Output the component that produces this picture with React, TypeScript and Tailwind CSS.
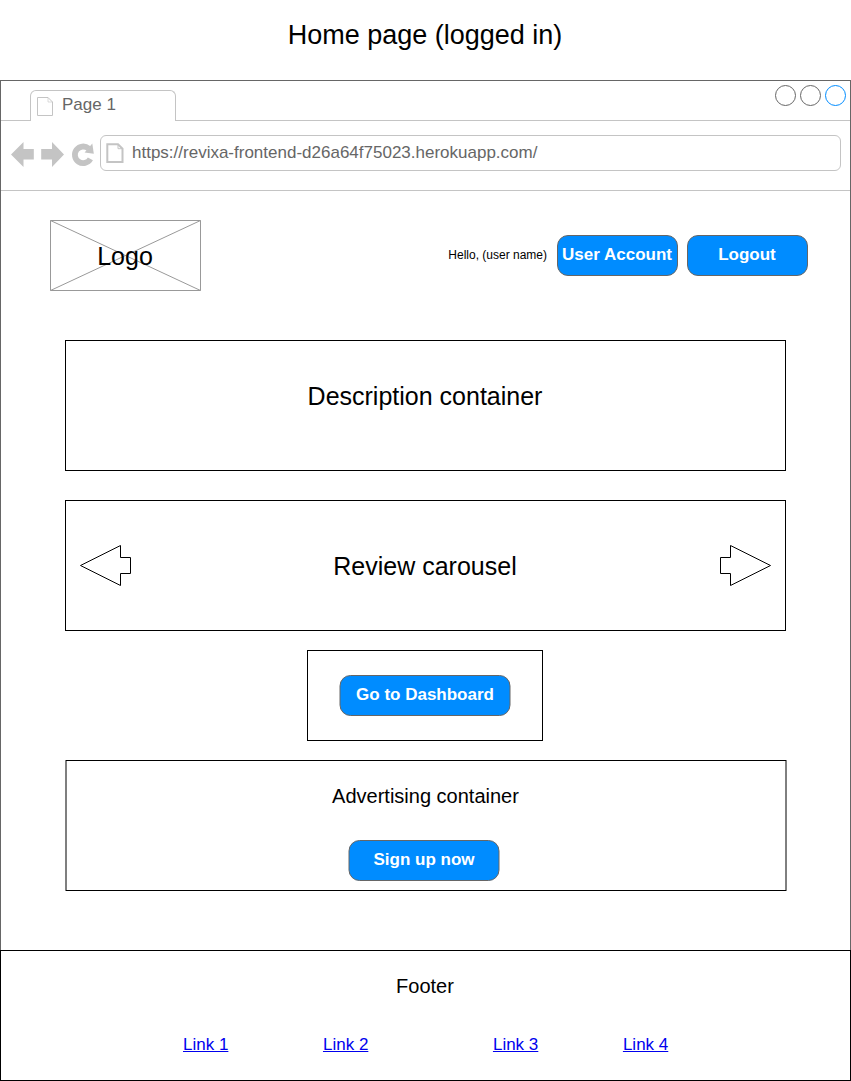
import React from "react";

function Button({ children, className }: { children: React.ReactNode; className: string }) {
  return (
    <button
      className={`flex h-[41px] shrink-0 items-center justify-center whitespace-nowrap rounded-[11px] border border-[#666666] bg-[#008cff] pb-px text-[17px] font-bold leading-5 text-white ${className}`}
    >
      {children}
    </button>
  );
}

function BrowserTabs() {
  return (
    <div className="flex h-10 items-end">
      <div className="h-full w-[29px] border-b border-[#c4c4c4]" />
      <div className="flex h-[31px] w-[146px] rounded-t-[6px] border-x border-t border-[#c4c4c4] pl-1.5">
        <svg className="mt-1.5 h-5 w-[17px]" viewBox="0 0 17 20" fill="none" stroke="#c4c4c4">
          <path d="M.5 .5H11L15.5 5V18.5H.5Z" />
          <path d="M11 .5V5H15.5" strokeOpacity=".6" />
        </svg>
        <span className="ml-2 mt-1 text-[17px] leading-5 text-[#666666]">Page 1</span>
      </div>
      <div className="flex h-full flex-1 justify-end border-b border-[#c4c4c4] pr-1 pt-1">
        <svg className="h-[21px] w-[71px]" viewBox="0 0 71 21" fill="none">
          <circle cx="10.5" cy="10.5" r="10" stroke="#666666" />
          <circle cx="35.5" cy="10.5" r="10" stroke="#666666" />
          <circle cx="60.5" cy="10.5" r="10" stroke="#008cff" />
        </svg>
      </div>
    </div>
  );
}

function AddressBar() {
  return (
    <div className="flex h-[70px] border-b border-[#c4c4c4]">
      <svg className="h-[69px] w-[99px] shrink-0" viewBox="1 121 99 69" fill="#c4c4c4">
        <path d="M11 154.5L23.5 142V149H33.8V159.5H23.5V167Z" />
        <path d="M64 154.5L52 142V149H41.2V159.5H52V167Z" />
        <path
          d="M90.4 158.9A8.3 8.3 0 1 1 88.6 148.5"
          fill="none"
          stroke="#c4c4c4"
          strokeWidth="5.8"
        />
        <path d="M92.3 143.6L93.8 153.8L84.6 152.4Z" />
      </svg>
      <div className="mt-3.5 flex h-9 w-[741px] rounded-[6px] border border-[#c4c4c4] pl-[5px]">
        <svg className="mt-[7px] h-5 w-[18px]" viewBox="0 0 18 20" fill="none" stroke="#c4c4c4">
          <path d="M1.3 1.2H12L16.5 5.7V19H1.3Z" strokeWidth="2" />
          <path d="M12 1.2V5.7H16.5" />
        </svg>
        <span className="ml-2 mt-[7px] text-[17px] leading-5 text-[#666666]">
          https://revixa-frontend-d26a64f75023.herokuapp.com/
        </span>
      </div>
    </div>
  );
}

function Header() {
  return (
    <header className="mt-[29px] flex h-[71px] items-center pl-[49px] pr-[42px]">
      <div className="grid h-[71px] w-[151px] place-items-center">
        <svg className="col-start-1 row-start-1 h-[71px] w-[151px]" viewBox="0 0 151 71" fill="none" stroke="#999999">
          <path d="M.5 .5H150.5V70.5H.5ZM.5 .5L150.5 70.5M150.5 .5L.5 70.5" />
        </svg>
        <span className="col-start-1 row-start-1 mr-px text-[25px] leading-7">Logo</span>
      </div>
      <span className="mb-0.5 ml-auto mr-2.5 text-[12px] leading-4">Hello, (user name)</span>
      <Button className="mr-[9px] w-[121px] pr-px">User Account</Button>
      <Button className="w-[121px] pr-px">Logout</Button>
    </header>
  );
}

function CarouselArrow({ className }: { className?: string }) {
  return (
    <svg className={`h-[42px] w-[52px] ${className ?? ""}`} viewBox="0 0 52 42" fill="none" stroke="#000">
      <path d="M.5 20.5L40.5 .5V12.5H50.5V28.5H40.5V40.5Z" />
    </svg>
  );
}

const links = [
  { label: "Link 1", gap: "ml-[182px]" },
  { label: "Link 2", gap: "ml-[94.6px]" },
  { label: "Link 3", gap: "ml-[124.6px]" },
  { label: "Link 4", gap: "ml-[84.6px]" },
];

export default function App() {
  return (
    <div className="flex h-[1081px] w-[851px] flex-col bg-white font-['Liberation_Sans',Arial,sans-serif] text-black">
      <h1 className="h-20 pr-px pt-[19px] text-center text-[27px] leading-8">Home page (logged in)</h1>
      <div className="h-[870px] border-x border-t border-[#666666]">
        <BrowserTabs />
        <AddressBar />
        <Header />
        <main className="flex flex-col items-center pt-[49px]">
          <section className="flex h-[131px] w-[721px] justify-center border border-black pr-px pt-[41px] text-[25px] leading-7">
            Description container
          </section>
          <section className="mt-[29px] flex h-[131px] w-[721px] items-start justify-between border border-black px-3.5 text-[25px] leading-7">
            <CarouselArrow className="mt-11" />
            <span className="mr-px mt-[51px]">Review carousel</span>
            <CarouselArrow className="mt-11 -scale-x-100" />
          </section>
          <section className="mr-px mt-[19px] flex h-[91px] w-[236px] items-start justify-center border border-black pt-6">
            <Button className="mr-px w-[171px] translate-x-[0.5px]">Go to Dashboard</Button>
          </section>
          <section className="mt-[19px] flex h-[131px] w-[721px] translate-x-[0.5px] flex-col items-center border border-black">
            <p className="mr-px mt-[23px] text-[20px] leading-6">Advertising container</p>
            <Button className="mr-[5px] mt-8 w-[151px] pl-px">Sign up now</Button>
          </section>
        </main>
      </div>
      <footer className="h-[131px] border border-black">
        <p className="mt-[23px] pr-px text-center text-[20px] leading-6">Footer</p>
        <nav className="mt-[37px] flex text-[17px] leading-5 text-[#0000ee]">
          {links.map((l) => (
            <a key={l.label} href="#" className={`underline ${l.gap}`}>
              {l.label}
            </a>
          ))}
        </nav>
      </footer>
    </div>
  );
}
